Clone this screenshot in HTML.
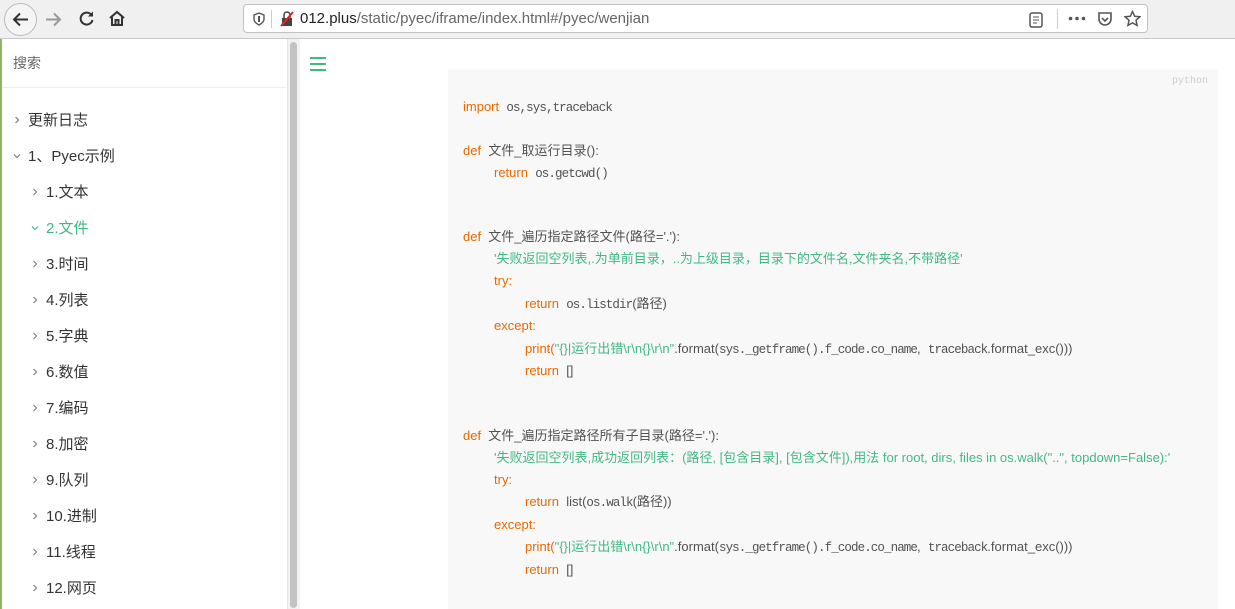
<!DOCTYPE html>
<html><head><meta charset="utf-8"><style>
*{margin:0;padding:0;box-sizing:border-box}
body{width:1235px;height:609px;overflow:hidden;background:#fff;font-family:"Liberation Sans","Noto Sans CJK SC",sans-serif;position:relative}
.bar{position:absolute;left:0;top:0;width:1235px;height:39px;background:#f0f0f0;border-bottom:1px solid #c8c8c8}
.url{position:absolute;left:243px;top:4px;width:905px;height:29px;background:#fff;border:1px solid #c2c2c2;border-radius:4px}
.side{position:absolute;left:0;top:39px;width:288px;height:570px;border-right:1px solid #e5e5e5;border-left:2px solid #8fb36c}
.search{height:49px;border-bottom:1px solid #eee;padding:14px 11px;font-size:14px;color:#666}
.it{position:absolute;font-size:15px;color:#333;white-space:nowrap;line-height:20px}
.it svg{display:inline-block;vertical-align:middle;margin-right:6px;margin-top:-2px}
.scroll{position:absolute;left:288px;top:39px;width:12px;height:570px;background:#f2f2f2}
.thumb{position:absolute;left:290px;top:42px;width:7px;height:566px;background:#c3c3c3;border-radius:4px}
.code{position:absolute;left:448px;top:69px;width:770px;height:540px;background:#f8f8f8}
.ln{position:absolute;font-size:13px;color:#525252;white-space:nowrap;line-height:16px}
.k{color:#e96900}.s{color:#42b983}
.m{font-family:"Liberation Mono",monospace;font-size:12.5px;letter-spacing:-0.9px}
</style></head><body>
<svg width="0" height="0" style="position:absolute"><defs>
<symbol id="r" viewBox="0 0 10 10"><path d="M3.5 2 L6.5 5 L3.5 8" fill="none" stroke="#777" stroke-width="1.1"/></symbol>
<symbol id="d" viewBox="0 0 10 10"><path d="M2 3.5 L5 6.5 L8 3.5" fill="none" stroke="#777" stroke-width="1.1"/></symbol>
<symbol id="dg" viewBox="0 0 10 10"><path d="M2 3.5 L5 6.5 L8 3.5" fill="none" stroke="#42b983" stroke-width="1.1"/></symbol>
</defs></svg>
<div class="bar">
<div style="position:absolute;left:4px;top:3px;width:33px;height:33px;border:1px solid #bbb;border-radius:50%;background:#f5f5f5"></div>
<svg style="position:absolute;left:11px;top:10px" width="19" height="19"><path d="M17 9.5 H3 M9 3.5 L3 9.5 L9 15.5" fill="none" stroke="#333" stroke-width="2"/></svg>
<svg style="position:absolute;left:44px;top:10px" width="19" height="19"><path d="M2 9.5 H16 M10 3.5 L16 9.5 L10 15.5" fill="none" stroke="#999" stroke-width="2"/></svg>
<svg style="position:absolute;left:78px;top:10px" width="17" height="17"><path d="M13.5 5 A6 6 0 1 0 14.5 10" fill="none" stroke="#333" stroke-width="2"/><path d="M15 1.5 V6.5 H10Z" fill="#333"/></svg>
<svg style="position:absolute;left:108px;top:10px" width="18" height="17" viewBox="0 0 18 17"><path d="M2 8 L9 2 L16 8 M4 7 V15 H14 V7 M7.5 15 V10 H10.5 V15" fill="none" stroke="#333" stroke-width="2"/></svg>
<div class="url">
<svg style="position:absolute;left:9px;top:7px" width="12" height="14"><path d="M6 1 L11 3 V7 C11 10 8 12 6 13 C4 12 1 10 1 7 V3Z" fill="none" stroke="#555" stroke-width="1.4"/><rect x="5" y="4" width="2" height="6" fill="#555"/></svg>
<div style="position:absolute;left:27px;top:5px;width:1px;height:18px;background:#ccc"></div>
<svg style="position:absolute;left:36px;top:6px" width="14" height="16"><rect x="2" y="7" width="10" height="8" fill="#444"/><path d="M4 7 V4 a3 3 0 0 1 6 0 V7" fill="none" stroke="#444" stroke-width="1.5"/><line x1="1" y1="15" x2="13" y2="1" stroke="#e22" stroke-width="2"/></svg>
<div style="position:absolute;left:56px;top:5px;font-size:15px;color:#222">012.plus<span style="color:#666">/static/pyec/iframe/index.html#/pyec/wenjian</span></div>
<svg style="position:absolute;left:785px;top:7px" width="14" height="16"><rect x="1" y="1" width="12" height="14" rx="2" fill="none" stroke="#555" stroke-width="1.5"/><path d="M4 5h6M4 8h6M4 11h4" stroke="#555"/></svg>
<div style="position:absolute;left:813px;top:4px;width:1px;height:20px;background:#ccc"></div>
<svg style="position:absolute;left:824px;top:11px" width="18" height="5"><circle cx="2.5" cy="2.5" r="1.8" fill="#555"/><circle cx="9" cy="2.5" r="1.8" fill="#555"/><circle cx="15.5" cy="2.5" r="1.8" fill="#555"/></svg>
<svg style="position:absolute;left:853px;top:6px" width="16" height="16"><path d="M2 2 H14 V8 a6 6 0 0 1 -12 0Z" fill="none" stroke="#555" stroke-width="1.6"/><path d="M5 7 L8 10 L11 7" fill="none" stroke="#555" stroke-width="1.6"/></svg>
<svg style="position:absolute;left:880px;top:5px" width="17" height="17"><path d="M8.5 1.5 L10.7 6.3 L15.8 6.8 L12 10.3 L13.1 15.4 L8.5 12.8 L3.9 15.4 L5 10.3 L1.2 6.8 L6.3 6.3Z" fill="none" stroke="#555" stroke-width="1.5"/></svg>
</div>
</div>
<div class="side"><div class="search">搜索</div></div>
<div class="it" style="left:12px;top:111px"><svg width="10" height="10"><use href="#r"/></svg>更新日志</div>
<div class="it" style="left:12px;top:147px"><svg width="10" height="10"><use href="#d"/></svg>1、Pyec示例</div>
<div class="it" style="left:30px;top:183px"><svg width="10" height="10"><use href="#r"/></svg>1.文本</div>
<div class="it" style="left:30px;top:219px;color:#42b983"><svg width="10" height="10"><use href="#dg"/></svg>2.文件</div>
<div class="it" style="left:30px;top:255px"><svg width="10" height="10"><use href="#r"/></svg>3.时间</div>
<div class="it" style="left:30px;top:291px"><svg width="10" height="10"><use href="#r"/></svg>4.列表</div>
<div class="it" style="left:30px;top:327px"><svg width="10" height="10"><use href="#r"/></svg>5.字典</div>
<div class="it" style="left:30px;top:363px"><svg width="10" height="10"><use href="#r"/></svg>6.数值</div>
<div class="it" style="left:30px;top:399px"><svg width="10" height="10"><use href="#r"/></svg>7.编码</div>
<div class="it" style="left:30px;top:435px"><svg width="10" height="10"><use href="#r"/></svg>8.加密</div>
<div class="it" style="left:30px;top:471px"><svg width="10" height="10"><use href="#r"/></svg>9.队列</div>
<div class="it" style="left:30px;top:507px"><svg width="10" height="10"><use href="#r"/></svg>10.进制</div>
<div class="it" style="left:30px;top:543px"><svg width="10" height="10"><use href="#r"/></svg>11.线程</div>
<div class="it" style="left:30px;top:579px"><svg width="10" height="10"><use href="#r"/></svg>12.网页</div>
<div class="scroll"></div><div class="thumb"></div>
<div style="position:absolute;left:310px;top:57px;width:16px;height:2px;background:#42b983;box-shadow:0 6px 0 #42b983,0 12px 0 #42b983"></div>
<div class="code"><div style="position:absolute;right:10px;top:7px;font-size:10px;color:#ccc;font-family:'Liberation Mono',monospace">python</div></div>
<div class="ln" style="left:463px;top:99px"><span class="k">import</span>&nbsp; <span class="m">os,sys,traceback</span></div>
<div class="ln" style="left:463px;top:143px"><span class="k">def</span>&nbsp; 文件_取运行目录():</div>
<div class="ln" style="left:494px;top:165px"><span class="k">return</span>&nbsp; <span class="m">os.getcwd()</span></div>
<div class="ln" style="left:463px;top:229px"><span class="k">def</span>&nbsp; 文件_遍历指定路径文件(路径='.'):</div>
<div class="ln s" style="left:494px;top:251px">'失败返回空列表,.为单前目录，..为上级目录，目录下的文件名,文件夹名,不带路径'</div>
<div class="ln k" style="left:494px;top:273px">try:</div>
<div class="ln" style="left:525px;top:296px"><span class="k">return</span>&nbsp; <span class="m">os.listdir</span>(路径)</div>
<div class="ln k" style="left:494px;top:318px">except:</div>
<div class="ln" style="left:525px;top:341px"><span class="k">print(</span><span class="s">"{}|运行出错\r\n{}\r\n"</span>.format(<span class="m">sys._getframe().f_code.co_name</span>,&nbsp; <span class="m">traceback</span>.format_exc()))</div>
<div class="ln" style="left:525px;top:363px"><span class="k">return</span>&nbsp; []</div>
<div class="ln" style="left:463px;top:428px"><span class="k">def</span>&nbsp; 文件_遍历指定路径所有子目录(路径='.'):</div>
<div class="ln s" style="left:494px;top:450px">'失败返回空列表,成功返回列表：(路径, [包含目录], [包含文件]),用法 for root, dirs, files in os.walk("..", topdown=False):'</div>
<div class="ln k" style="left:494px;top:472px">try:</div>
<div class="ln" style="left:525px;top:494px"><span class="k">return</span>&nbsp; list(<span class="m">os.walk</span>(路径))</div>
<div class="ln k" style="left:494px;top:517px">except:</div>
<div class="ln" style="left:525px;top:539px"><span class="k">print(</span><span class="s">"{}|运行出错\r\n{}\r\n"</span>.format(<span class="m">sys._getframe().f_code.co_name</span>,&nbsp; <span class="m">traceback</span>.format_exc()))</div>
<div class="ln" style="left:525px;top:562px"><span class="k">return</span>&nbsp; []</div>
</body></html>
